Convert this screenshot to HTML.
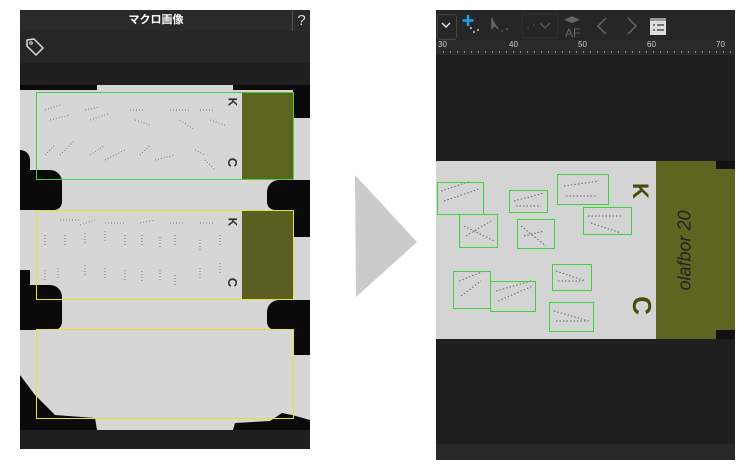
<!DOCTYPE html>
<html><head><meta charset="utf-8"><style>
body{margin:0;width:750px;height:472px;background:#fff;position:relative;overflow:hidden;font-family:"Liberation Sans","Noto Sans CJK JP",sans-serif}
.a{position:absolute}
.k{position:absolute;background:#0a0a0a}
</style></head><body>
<!-- LEFT PANEL -->
<div class="a" style="left:20px;top:10px;width:290px;height:439px;background:#1f1f1f"></div>
<div class="a" style="left:20px;top:10px;width:272px;height:21px;background:#2a2a2a;color:#fff;font-size:11px;font-weight:bold;text-align:center;line-height:21px">マクロ画像</div>
<div class="a" style="left:292px;top:10px;width:1px;height:21px;background:#555"></div>
<div class="a" style="left:293px;top:10px;width:17px;height:21px;background:#2a2a2a;color:#ddd;font-size:15px;text-align:center;line-height:21px">?</div>
<div class="a" style="left:20px;top:31px;width:290px;height:32px;background:#262626"></div>
<svg class="a" style="left:24px;top:36px" width="22" height="22" viewBox="0 0 22 22"><path d="M3 4 L10 3 L19 12 L12 19 L3 10 Z" fill="none" stroke="#ddd" stroke-width="1.5" stroke-linejoin="round"/><circle cx="7" cy="7" r="1.3" fill="none" stroke="#ddd"/></svg>
<div class="a" style="left:20px;top:85px;width:290px;height:345px;background:#d6d6d6;overflow:hidden">
 <div class="k" style="left:0;top:0;width:77px;height:5px"></div>
 <div class="k" style="left:213px;top:0;width:77px;height:5px"></div>
 <div class="k" style="left:273px;top:0;width:17px;height:33px"></div>
 <div class="k" style="left:0;top:65px;width:10px;height:60px;border-radius:0 10px 0 0"></div>
 <div class="k" style="left:0;top:85px;width:42px;height:40px;border-radius:0 12px 8px 0"></div>
 <div class="k" style="left:247px;top:95px;width:43px;height:30px;border-radius:12px 0 0 8px"></div>
 <div class="k" style="left:273px;top:95px;width:17px;height:57px"></div>
 <div class="k" style="left:0;top:185px;width:10px;height:60px"></div>
 <div class="k" style="left:0;top:200px;width:42px;height:45px;border-radius:0 12px 8px 0"></div>
 <div class="k" style="left:247px;top:215px;width:43px;height:30px;border-radius:12px 0 0 8px"></div>
 <div class="k" style="left:273px;top:215px;width:17px;height:55px"></div>
 <svg class="a" style="left:0;top:0" width="290" height="345">
  <path d="M0 290 L15 310 L35 330 L75 333 L77 345 L0 345 Z" fill="#0a0a0a"/>
  <path d="M213 345 L215 338 L250 336 L262 328 L272 330 L290 335 V345 Z" fill="#0a0a0a"/>
 </svg>
 <div class="a" style="left:222px;top:7px;width:51px;height:87px;background:#5e6420"></div>
 <div class="a" style="left:222px;top:126px;width:51px;height:88px;background:#5a5e20"></div>
 <div class="a" style="left:208px;top:10px;font-size:12px;font-weight:bold;color:#333;transform:rotate(90deg)">K</div>
 <div class="a" style="left:208px;top:70px;font-size:13px;font-weight:bold;color:#333;transform:rotate(90deg)">C</div>
 <div class="a" style="left:208px;top:130px;font-size:12px;font-weight:bold;color:#333;transform:rotate(90deg)">K</div>
 <div class="a" style="left:208px;top:190px;font-size:13px;font-weight:bold;color:#333;transform:rotate(90deg)">C</div>
 <svg class="a" style="left:0;top:0" width="220" height="220">
  <g stroke="#777" stroke-width="1" fill="none" stroke-dasharray="1 2">
   <path d="M25 25 l15 -5 M30 35 l20 -5 M65 25 l15 -3 M70 35 l18 -6 M110 25 l15 0 M115 35 l15 5 M150 25 l20 0 M160 35 l15 10 M180 25 l15 0 M190 35 l15 5"/>
   <path d="M25 70 l10 -10 M40 70 l15 -15 M70 70 l15 -10 M85 75 l20 -10 M120 70 l10 -10 M135 75 l20 -5 M175 65 l10 5 M185 75 l10 10"/>
   <path d="M40 135 l20 0 M60 140 l15 -5 M85 138 l20 0 M120 138 l15 -3 M150 138 l15 0 M180 138 l15 0"/>
   <path d="M25 150 v12 M45 150 v12 M65 148 v12 M85 146 v12 M105 150 v12 M122 150 v12 M140 152 v12 M155 150 v12 M180 155 v12 M200 150 v12"/>
   <path d="M25 185 v12 M38 183 v12 M65 180 v12 M85 183 v12 M105 185 v12 M122 186 v12 M140 185 v12 M155 190 v12 M180 183 v12 M200 178 v12"/>
  </g>
 </svg>
</div>
<div class="a" style="left:36px;top:92px;width:256px;height:86px;border:1px solid #3fd13f"></div>
<div class="a" style="left:36px;top:210px;width:256px;height:88px;border:1px solid #e6e030"></div>
<div class="a" style="left:36px;top:329px;width:256px;height:88px;border:1px solid #e6e030"></div>
<!-- ARROW -->
<svg class="a" style="left:350px;top:170px" width="72" height="132"><path d="M5 5 L67 72 L6 127 Z" fill="#cbcbcb"/></svg>
<!-- RIGHT PANEL -->
<div class="a" style="left:436px;top:10px;width:299px;height:450px;background:#1f1f1f"></div>
<div class="a" style="left:436px;top:10px;width:299px;height:30px;background:#262626"></div>
<div class="a" style="left:437px;top:14px;width:18px;height:24px;border:1px solid #444;border-radius:3px"></div>
<svg class="a" style="left:436px;top:10px" width="299" height="30">
<path d="M6 13 L10 17 L14 13" stroke="#ddd" stroke-width="1.5" fill="none"/>
<path d="M32 5 V16 M26.5 10.5 H37.5" stroke="#1e9ff0" stroke-width="2.5"/>
<circle cx="35" cy="18" r="1" fill="#ccc"/><circle cx="42" cy="20" r="1" fill="#ccc"/><circle cx="38" cy="22" r="1" fill="#ccc"/>
<path d="M56 8 L56 18 L59 15 L62 19" stroke="#666" stroke-width="1.5" fill="#666"/>
<circle cx="66" cy="21" r="1" fill="#555"/><circle cx="71" cy="19" r="1" fill="#3a7aa0"/>
<rect x="86" y="4" width="36" height="24" rx="3" fill="none" stroke="#333"/>
<circle cx="92" cy="18" r=".8" fill="#555"/><circle cx="98" cy="15" r=".8" fill="#555"/>
<path d="M104 13 L109 18 L114 13" stroke="#555" stroke-width="1.5" fill="none"/>
<path d="M128 10 L136 6 L144 10 L136 13 Z" fill="#666"/>
<text x="129" y="27" font-size="12" fill="#666" font-family="Liberation Sans">AF</text>
<path d="M170 8 L162 16 L170 24" stroke="#666" stroke-width="1.5" fill="none"/>
<path d="M192 8 L200 16 L192 24" stroke="#666" stroke-width="1.5" fill="none"/>
<rect x="214" y="8" width="16" height="17" fill="#ddd"/>
<rect x="214" y="8" width="16" height="3" fill="#999"/>
<path d="M217 15 H219 M221 15 H228 M217 20 H219 M221 20 H228" stroke="#333" stroke-width="1.2"/>
</svg>
<div class="a" style="left:436px;top:40px;width:299px;height:15px;background:#2a2a2a"></div>
<div class="a" style="left:438px;top:40px;font-size:8px;color:#ccc">30</div>
<div class="a" style="left:509px;top:40px;font-size:8px;color:#ccc">40</div>
<div class="a" style="left:578px;top:40px;font-size:8px;color:#ccc">50</div>
<div class="a" style="left:647px;top:40px;font-size:8px;color:#ccc">60</div>
<div class="a" style="left:716px;top:40px;font-size:8px;color:#ccc">70</div>
<div class="a" style="left:443px;top:51px;width:292px;height:2px;background:repeating-linear-gradient(90deg,#888 0 1px,transparent 1px 7px)"></div>
<div class="a" style="left:436px;top:161px;width:220px;height:178px;background:#d4d4d4"></div>
<div class="a" style="left:656px;top:161px;width:79px;height:178px;background:#5e6520"></div>
<div class="a" style="left:716px;top:161px;width:19px;height:8px;background:#111"></div>
<div class="a" style="left:716px;top:330px;width:19px;height:9px;background:#111"></div>
<div class="a" style="left:632px;top:178px;font-size:22px;font-weight:bold;color:#4a4a10;transform:rotate(90deg)">K</div>
<div class="a" style="left:632px;top:290px;font-size:26px;font-weight:bold;color:#4a4a10;transform:rotate(90deg)">C</div>
<div class="a" style="left:645px;top:240px;font-size:18px;color:#222;transform:rotate(-90deg);white-space:nowrap;font-style:italic">olafbor 20</div>
<svg class="a" style="left:436px;top:161px" width="220" height="178"><g stroke="#777" stroke-width="1.2" fill="none" stroke-dasharray="1.5 2">
<path d="M5 30 l30 -10 M8 40 l35 -12 M78 40 l30 -8 M80 45 l25 0 M128 25 l35 -5 M130 35 l30 0 M152 55 l35 0 M155 62 l30 10 M28 65 l30 15 M30 75 l25 -15 M85 65 l25 20 M88 75 l20 -5 M23 120 l25 -10 M25 135 l20 -15 M60 130 l35 -10 M62 140 l35 -15 M120 110 l30 10 M122 120 l25 0 M118 150 l35 10 M120 160 l30 0"/>
</g></svg>
<div class="a" style="left:437px;top:182px;width:45px;height:31px;border:1px solid #3fd13f"></div>
<div class="a" style="left:509px;top:190px;width:37px;height:21px;border:1px solid #3fd13f"></div>
<div class="a" style="left:557px;top:174px;width:50px;height:29px;border:1px solid #3fd13f"></div>
<div class="a" style="left:583px;top:207px;width:47px;height:26px;border:1px solid #3fd13f"></div>
<div class="a" style="left:459px;top:214px;width:37px;height:32px;border:1px solid #3fd13f"></div>
<div class="a" style="left:517px;top:219px;width:36px;height:28px;border:1px solid #3fd13f"></div>
<div class="a" style="left:453px;top:271px;width:36px;height:36px;border:1px solid #3fd13f"></div>
<div class="a" style="left:490px;top:281px;width:44px;height:29px;border:1px solid #3fd13f"></div>
<div class="a" style="left:552px;top:264px;width:38px;height:25px;border:1px solid #3fd13f"></div>
<div class="a" style="left:549px;top:302px;width:43px;height:28px;border:1px solid #3fd13f"></div>
<div class="a" style="left:436px;top:444px;width:299px;height:16px;background:#282828"></div>
</body></html>
